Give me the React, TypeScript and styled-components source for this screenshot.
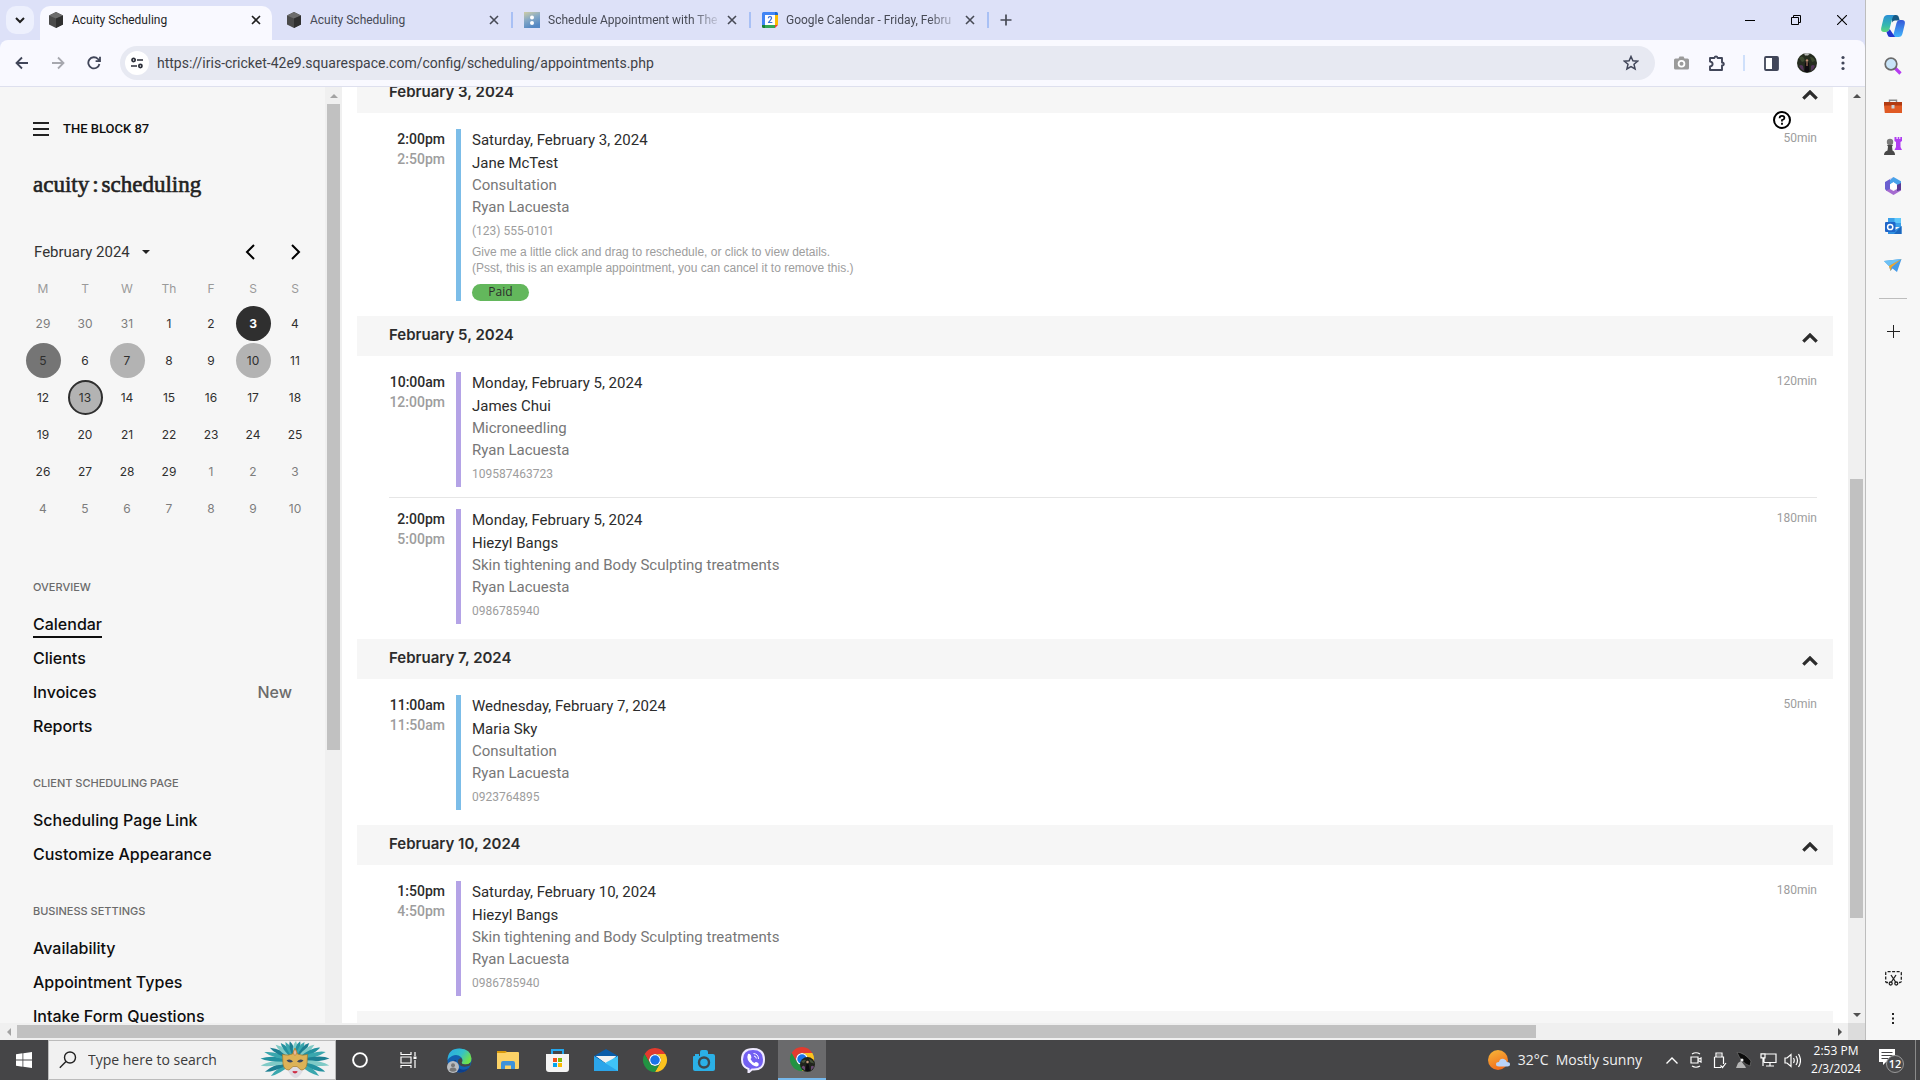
import React from "react";
import styled, { createGlobalStyle, css } from "styled-components";

const ui = `"Open Sans", "Noto Sans", sans-serif`;
const body = `Roboto, "Liberation Sans", sans-serif`;
const brand = `Inter, "Liberation Sans", sans-serif`;

const GlobalStyle = createGlobalStyle`
  *, *::before, *::after { box-sizing: border-box; }
  body { margin: 0; background: #fff; font-family: ${body}; }
  button, input, select { font: inherit; color: inherit; border: 0; background: none; padding: 0; margin: 0; outline: none; }
  a { color: inherit; text-decoration: none; }
  h1, h2, p { margin: 0; font-weight: inherit; font-size: inherit; }
  svg { display: block; flex: none; }
`;

/* ---------- shell ---------- */
const Desktop = styled.div`
  display: flex;
  flex-direction: column;
  height: 100vh;
  overflow: hidden;
`;
const Workspace = styled.div`
  display: flex;
  flex: 1;
  min-height: 0;
`;
const BrowserWindow = styled.div`
  display: flex;
  flex-direction: column;
  flex: 1;
  min-width: 0;
  background: #dde1f8;
`;

/* ---------- tab strip ---------- */
const TabStrip = styled.div`
  display: flex;
  height: 40px;
  padding: 6px 0 0 6px;
  font: 12px/16px ${body};
  color: #474a55;
`;
const TabSearch = styled.button`
  display: grid;
  place-items: center;
  width: 28px;
  height: 28px;
  margin-right: 6px;
  border-radius: 10px;
  background: #edf0fd;
`;
const Tab = styled.div<{ $active?: boolean; $divided?: boolean }>`
  position: relative;
  display: flex;
  align-items: center;
  width: 238px;
  height: 34px;
  padding: 0 12px 6px 8px;
  ${(p) =>
    p.$active &&
    css`
      &::before {
        content: "";
        position: absolute;
        inset: 0 6px 0 0;
        border-radius: 10px 10px 0 0;
        background: #f9f9ff;
      }
      color: #1f1f1f;
    `}
  ${(p) =>
    p.$divided &&
    css`
      &::after {
        content: "";
        position: absolute;
        right: 3px;
        top: 6px;
        width: 2px;
        height: 16px;
        background: #a8c0f5;
      }
    `}
`;
const TabLink = styled.button<{ $fade?: boolean }>`
  position: relative;
  display: flex;
  align-items: center;
  gap: 8px;
  flex: 1;
  min-width: 0;
  margin-right: 6px;
  white-space: nowrap;
  ${(p) => p.$fade && css`mask-image: linear-gradient(90deg, #000 86%, rgba(0, 0, 0, 0.15));`}
`;
const TabClose = styled.button`
  position: relative;
  display: grid;
  place-items: center;
  width: 16px;
  height: 16px;
  margin-right: 2px;
`;
const NewTab = styled.button`
  display: grid;
  place-items: center;
  width: 28px;
  height: 28px;
`;
const WindowControls = styled.div`
  display: flex;
  margin-left: auto;
  height: 28px;
  button { display: grid; place-items: center; width: 46px; }
`;

/* ---------- toolbar ---------- */
const Toolbar = styled.div`
  display: flex;
  align-items: center;
  height: 47px;
  padding: 0 4px;
  border-bottom: 1px solid #dee0ee;
  border-radius: 8px 8px 0 0;
  background: #f9f9ff;
`;
const ToolButton = styled.button`
  display: grid;
  place-items: center;
  width: 36px;
  height: 34px;
`;
const AddressBar = styled.form`
  display: flex;
  align-items: center;
  flex: 1;
  height: 34px;
  margin: 0 8px;
  padding: 0 6px 0 5px;
  border-radius: 17px;
  background: #e7e9f2;
`;
const SiteInfo = styled.button`
  display: grid;
  place-items: center;
  width: 24px;
  height: 24px;
  margin-right: 8px;
  border-radius: 50%;
  background: #fff;
`;
const Url = styled.input`
  flex: 1;
  min-width: 0;
  font: 14px/20px ${body};
  color: #3f4248;
`;
const Divider = styled.span`
  width: 2px;
  height: 16px;
  margin: 0 8px;
  background: #cfe0fb;
`;

/* ---------- page ---------- */
const Page = styled.div`
  display: flex;
  flex: 1;
  min-height: 0;
  background: #fff;
`;
const Side = styled.aside`
  width: 325px;
  flex: none;
  overflow: hidden;
  padding-top: 32px;
  background: #f6f6f6;
  color: #0e0e0e;
`;
const SiteRow = styled.button`
  display: flex;
  align-items: center;
  gap: 14px;
  height: 20px;
  margin-left: 33px;
  font: 500 13px/20px ${body};
`;
const Wordmark = styled.h1`
  margin: 32px 0 37px 33px;
  font: 23px/28px "Liberation Serif", serif;
  color: #222;
  -webkit-text-stroke: 0.6px #222;
  span { margin: 0 3px; }
`;
const MonthRow = styled.div`
  display: flex;
  align-items: center;
  height: 32px;
  margin: 0 17px 5px 34px;
  color: #333;
`;
const MonthSelect = styled.select`
  appearance: none;
  width: 108px;
  font: 15px/20px ${body};
`;
const MonthArrow = styled.button<{ $first?: boolean }>`
  display: grid;
  place-items: center;
  width: 24px;
  height: 24px;
  margin-left: ${(p) => (p.$first ? "auto" : "22px")};
`;
const MonthTable = styled.table`
  margin-left: 22px;
  border-collapse: collapse;
  table-layout: fixed;
  width: 294px;
  font: 12px/16px ${brand};
  th { height: 32px; padding: 0; font-weight: 400; color: #9a9a9a; }
  td { height: 37px; padding: 0; text-align: center; }
`;
type Mark = "today" | "busy" | "some" | "picked" | undefined;
const marks = {
  today: css`background: #2f2f2f; color: #fff; font-weight: 700;`,
  busy: css`background: #757575;`,
  some: css`background: #b3b3b3;`,
  picked: css`background: #b3b3b3; border: 2px solid #2f2f2f;`,
};
const Day = styled.button<{ $mark?: Mark; $muted?: boolean }>`
  width: 35px;
  height: 35px;
  border-radius: 50%;
  color: ${(p) => (p.$muted ? "#7d7d7d" : "#2f2f2f")};
  ${(p) => p.$mark && marks[p.$mark]}
`;
const Nav = styled.nav`
  padding: 20px 33px 0;
  font: 500 16px/24px ${brand};
`;
const NavLabel = styled.h2`
  margin: 32px 0 12px;
  font: 500 11px/16px ${brand};
  color: #6b6b6b;
`;
const NavItem = styled.a`
  display: flex;
  justify-content: space-between;
  align-items: flex-start;
  height: 34px;
  padding-top: 5px;
`;
const NavText = styled.span<{ $current?: boolean }>`
  border-bottom: 2px solid ${(p) => (p.$current ? "#0e0e0e" : "transparent")};
`;
const NavTag = styled.span`
  color: #6b6b6b;
`;

/* ---------- scroll bars ---------- */
const Rail = styled.div<{ $row?: boolean }>`
  display: flex;
  flex: ${(p) => (p.$row ? "1" : "none")};
  flex-direction: ${(p) => (p.$row ? "row" : "column")};
  align-items: center;
  ${(p) => (p.$row ? "height" : "width")}: 17px;
  background: #f0f0f0;
`;
const RailArrow = styled.button`
  display: grid;
  place-items: center;
  width: 17px;
  height: 17px;
`;
const RailSpace = styled.span<{ $grow: number }>`
  flex: ${(p) => p.$grow} 1 0;
`;
const RailThumb = styled.span<{ $grow: number; $row?: boolean }>`
  flex: ${(p) => p.$grow} 1 0;
  ${(p) => (p.$row ? "height" : "width")}: 13px;
  background: #c1c1c1;
`;
const BottomRail = styled.div`
  display: flex;
  height: 17px;
`;
const Corner = styled.span`
  width: 17px;
  background: #dcdcdc;
`;

/* ---------- appointments ---------- */
const Main = styled.main`
  position: relative;
  flex: 1;
  min-width: 0;
  overflow: hidden;
  padding: 0 15px;
`;
const Agenda = styled.div`
  margin-top: -14px;
`;
const GroupHeader = styled.header`
  display: flex;
  justify-content: space-between;
  height: 40px;
  padding: 9px 15px 0 32px;
  background: #f6f6f6;
  font: 600 15px/20px ${brand};
  color: #2c2c2c;
  button { padding-top: 6px; height: 20px; }
`;
const GroupBody = styled.div`
  padding: 16px 16px 15px 32px;
`;
const Appointment = styled.article`
  display: flex;
  & + & {
    margin-top: 10px;
    padding-top: 11px;
    border-top: 1px solid #e6e6e6;
  }
`;
const Times = styled.div`
  width: 56px;
  margin-right: 11px;
  text-align: right;
  white-space: nowrap;
  font: 500 14px/20px ${body};
  color: #2c2c2c;
  p + p { color: #9d9d9d; }
`;
const Details = styled.div<{ $color: string }>`
  flex: 1;
  padding-left: 11px;
  border-left: 5px solid ${(p) => p.$color};
  font: 15px/22px ${body};
  color: #2c2c2c;
`;
const ApptDate = styled.p`
  padding-bottom: 1px;
`;
const Muted = styled.p`
  color: #777;
`;
const Small = styled.p`
  font-size: 12px;
  line-height: 26px;
  color: #9d9d9d;
`;
const Note = styled.p`
  font: 12px/16px "Liberation Sans", sans-serif;
  color: #9d9d9d;
`;
const Badge = styled.span`
  display: block;
  width: 57px;
  height: 17px;
  margin-top: 8px;
  border-radius: 9px;
  background: #63b75c;
  font: 12px/16px ${ui};
  text-align: center;
`;
const Duration = styled.span`
  font: 12px/18px ${body};
  color: #9d9d9d;
`;
const Help = styled.button`
  position: absolute;
  right: 57px;
  top: 24px;
`;

/* ---------- right app rail ---------- */
const AppRail = styled.aside`
  display: flex;
  flex-direction: column;
  align-items: center;
  width: 55px;
  padding: 6px 0 2px;
  border-left: 1px solid #bdbdbd;
  background: #f7f7f7;
`;
const RailApp = styled.button`
  display: grid;
  place-items: center;
  width: 40px;
  height: 40px;
`;
const RailLine = styled.hr`
  width: 28px;
  margin: 12px 0;
  border: 0;
  border-top: 1px solid #bdbdbd;
`;
const Spacer = styled.span`
  flex: 1;
`;

/* ---------- taskbar ---------- */
const Taskbar = styled.footer`
  display: flex;
  height: 40px;
  background: #454547;
  color: #fff;
  font: 14px/20px ${ui};
`;
const TaskButton = styled.button<{ $active?: boolean }>`
  display: grid;
  place-items: center;
  width: 48px;
  height: 40px;
  ${(p) => p.$active && css`background: #6a6a6c; border-bottom: 2px solid #76b9ed;`}
`;
const TaskSearch = styled.label`
  display: flex;
  align-items: center;
  gap: 11px;
  width: 288px;
  padding: 0 3px 0 10px;
  border: 1px solid #bcbcbc;
  background: #f1f1f1;
  input { flex: 1; min-width: 0; color: #333; }
  input::placeholder { color: #3b3b3b; opacity: 1; }
`;
const Pinned = styled.div`
  display: flex;
  gap: 1px;
  margin-left: 3px;
`;
const Weather = styled.button`
  display: flex;
  align-items: center;
  gap: 7px;
  margin-left: auto;
  margin-right: 18px;
  color: #f0f0f0;
`;
const TrayButton = styled.button`
  display: grid;
  place-items: center;
  width: 24px;
  height: 40px;
`;
const Clock = styled.div`
  width: 64px;
  text-align: center;
  font-size: 12px;
  line-height: 18px;
  padding-top: 2px;
`;
const Notices = styled.button`
  display: grid;
  place-items: center;
  width: 48px;
  border-right: 1px solid #8a8a8a;
  margin-right: 4px;
`;

/* ---------- drawings ---------- */
const Cube = () => (
  <svg width="16" height="16" viewBox="0 0 16 16">
    <path d="M8 0l7 3.4v9.2L8 16l-7-3.4V3.400z" fill="#4b4b4b" />
    <path d="M8 0l7 3.400-7 3-7-3z" fill="#6c6c6c" />
    <path d="M8 6.400l7-3v9.200L8 16z" fill="#303030" />
  </svg>
);
const SchedIcon = () => (
  <svg width="16" height="16" viewBox="0 0 16 16">
    <defs>
      <linearGradient id="sch" x1="0" y1="0" x2=".4" y2="1">
        <stop offset="0" stopColor="#cfcda6" />
        <stop offset=".5" stopColor="#86a9c6" />
        <stop offset="1" stopColor="#5488c4" />
      </linearGradient>
    </defs>
    <path d="M0 0h16v16H0z" fill="url(#sch)" />
    <circle cx="8" cy="5.500" r="2" fill="#fff" />
    <circle cx="8" cy="11" r="2" fill="#fff" />
  </svg>
);
const GCal = () => (
  <svg width="16" height="16" viewBox="0 0 16 16">
    <path d="M0 1.500Q0 0 1.500 0H13v3H3v10H0z" fill="#4285f4" />
    <path d="M13 0h1.500Q16 0 16 1.500V3h-3z" fill="#1967d2" />
    <path d="M13 3h3v10h-3z" fill="#fbbc04" />
    <path d="M3 13h10v3H3z" fill="#34a853" />
    <path d="M0 13h3v3H1.500Q0 16 0 14.500z" fill="#188038" />
    <path d="M13 13h3l-3 3z" fill="#ea4335" />
    <path d="M3 3h10v10H3z" fill="#fff" />
    <text x="8" y="11.200" textAnchor="middle" fontSize="9" fontWeight="700" fontFamily="Roboto, sans-serif" fill="#3c6fd6">2</text>
  </svg>
);
const Cross = () => (
  <svg width="10" height="10" viewBox="0 0 10 10" stroke="currentColor" strokeWidth="1.600">
    <path d="M1 1l8 8M9 1L1 9" />
  </svg>
);
const Chrome = ({ avatar = false }) => (
  <svg width="26" height="26" viewBox="-2 -2 52 52">
    <circle cx="24" cy="24" r="12" fill="#fff" />
    <path d="M24 12h20.780a23.990 23.990 0 0 0-41.560.003L13.610 30l.009-.002A11.985 11.985 0 0 1 24 12z" fill="#e33b2e" />
    <path d="M34.391 30.003 24.001 48A23.994 23.994 0 0 0 44.780 12.003H23.999l-.003.009a11.985 11.985 0 0 1 10.395 17.991z" fill="#fcc31e" />
    <path d="M13.609 30.003 3.218 12.006A23.994 23.994 0 0 0 24.003 48l10.390-17.996-.007-.007a11.985 11.985 0 0 1-20.778.006z" fill="#229342" />
    <circle cx="24" cy="24" r="9.500" fill="#1a73e8" />
    {avatar && (
      <g>
        <circle cx="35" cy="35" r="15" fill="#20241c" />
        <path d="M22 30q5-6 10-4l-4 6zM38 24q8 2 10 9l-7-2z" fill="#45543a" />
        <path d="M31 48l2-14h4l3 14z" fill="#0d0b10" />
        <circle cx="35" cy="30" r="2.500" fill="#c79a7c" />
        <path d="M23 41q3-6 7-1v7zM42 39q4-3 6 1l-6 7z" fill="#6a4a74" />
      </g>
    )}
  </svg>
);
const Avatar = () => (
  <svg width="20" height="20" viewBox="0 0 20 20">
    <circle cx="10" cy="10" r="10" fill="#252c1f" />
    <path d="M7 .5q3-.8 6 0l-2 2H8z" fill="#b9b9b9" />
    <path d="M2 5q3-3 5 0t-2 4zM13 4q4 0 5 4l-3 1z" fill="#3d4a30" />
    <path d="M7.500 19l.5-9q2-3 4 0l.5 9z" fill="#0e0b10" />
    <circle cx="10" cy="7.500" r="1.200" fill="#c08d73" />
    <path d="M9.400 9h1.200v4H9.400z" fill="#a97860" />
    <path d="M2 13q2-2 4 0l1 5q-3-1-5-5zM14 13q2-2 4 0-1 3-4 5z" fill="#54355a" />
  </svg>
);
const Chevron = () => (
  <svg width="16" height="10" viewBox="0 0 16 10" fill="none" stroke="#2c2c2c" strokeWidth="3.200">
    <path d="M1.300 8.700L8 2l6.700 6.700" />
  </svg>
);
const Tri = ({ dir, color = "#505050" }: { dir: "u" | "d" | "l" | "r"; color?: string }) => {
  const d = { u: "M0 6l4-4 4 4z", d: "M0 2l4 4 4-4z", l: "M6 0L2 4l4 4z", r: "M2 0l4 4-4 4z" }[dir];
  return (
    <svg width="8" height="8" viewBox="0 0 8 8">
      <path d={d} fill={color} />
    </svg>
  );
};
const Mask = () => {
  const feathers = Array.from({ length: 21 }, (_, i) => {
    const angle = -120 + i * 12;
    const rad = (angle * Math.PI) / 180;
    const len = 1 / Math.hypot(Math.sin(rad) / 35, Math.cos(rad) / 20);
    return (
      <path
        key={i}
        transform={`translate(35 20) rotate(${angle})`}
        d={`M-1 -4Q-4 ${-len * 0.75} ${i < 10 ? -1 : 1} ${-len}Q4 ${-len * 0.65} 1 -4z`}
        fill={["#3aa7ae", "#1d7f92", "#7fcac6", "#23919f"][i % 4]}
      />
    );
  });
  return (
    <svg width="72" height="38" viewBox="0 0 72 38">
      {feathers}
      <path d="M26.500 22q0 9 6.500 14 2.500 2 5 0 6.500-5 6.500-14z" fill="#dedce4" />
      <path d="M22.500 13.500q6 1.500 10-.5l2.500-6 2.500 6q4 2 10 .5L47 23q-1 6-6 6l-4-3.500h-4L29 29q-5 0-6-6z" fill="#dcb257" stroke="#a67a2b" strokeWidth=".7" />
      <path d="M26.500 19.500q3.500-2.500 6.500 1-3.500 2.500-6.500-1zM43.500 19.500q-3.500-2.500-6.500 1 3.500 2.500 6.500-1z" fill="#3b4762" />
      <path d="M32.200 30.800q1.400-1.300 2.800-.5 1.400-.8 2.800.5-2.800 3.200-5.600 0z" fill="#cf2b44" />
      <ellipse cx="35" cy="11.500" rx="1.600" ry="2.800" fill="#e9b9a0" stroke="#b47b2d" strokeWidth=".6" />
    </svg>
  );
};

/* ---------- data ---------- */
const tabs = [
  { title: "Acuity Scheduling", icon: <Cube />, active: true },
  { title: "Acuity Scheduling", icon: <Cube />, divided: true },
  { title: "Schedule Appointment with The", icon: <SchedIcon />, divided: true, fade: true },
  { title: "Google Calendar - Friday, Febru", icon: <GCal />, divided: true, fade: true },
];

const weeks = [
  [29, 30, 31, 1, 2, 3, 4],
  [5, 6, 7, 8, 9, 10, 11],
  [12, 13, 14, 15, 16, 17, 18],
  [19, 20, 21, 22, 23, 24, 25],
  [26, 27, 28, 29, 1, 2, 3],
  [4, 5, 6, 7, 8, 9, 10],
];
const markOf: Record<string, Mark> = { "0-5": "today", "1-0": "busy", "1-2": "some", "1-5": "some", "2-1": "picked" };
const isMuted = (w: number, d: number) => (w === 0 && d < 3) || (w === 4 && d > 3) || w === 5;

const nav = [
  { label: "OVERVIEW", items: ["Calendar", "Clients", "Invoices", "Reports"] },
  { label: "CLIENT SCHEDULING PAGE", items: ["Scheduling Page Link", "Customize Appearance"] },
  { label: "BUSINESS SETTINGS", items: ["Availability", "Appointment Types", "Intake Form Questions"] },
];

const blue = "#7cbde8";
const violet = "#b4a3e6";
type Appt = { start: string; end: string; date: string; name: string; type: string; phone: string; mins: string; color: string; note?: string[]; paid?: boolean };
const groups: { day: string; items: Appt[] }[] = [
  {
    day: "February 3, 2024",
    items: [
      {
        start: "2:00pm", end: "2:50pm", date: "Saturday, February 3, 2024", name: "Jane McTest", type: "Consultation",
        phone: "(123) 555-0101", mins: "50min", color: blue, paid: true,
        note: [
          "Give me a little click and drag to reschedule, or click to view details.",
          "(Psst, this is an example appointment, you can cancel it to remove this.)",
        ],
      },
    ],
  },
  {
    day: "February 5, 2024",
    items: [
      { start: "10:00am", end: "12:00pm", date: "Monday, February 5, 2024", name: "James Chui", type: "Microneedling", phone: "109587463723", mins: "120min", color: violet },
      { start: "2:00pm", end: "5:00pm", date: "Monday, February 5, 2024", name: "Hiezyl Bangs", type: "Skin tightening and Body Sculpting treatments", phone: "0986785940", mins: "180min", color: violet },
    ],
  },
  {
    day: "February 7, 2024",
    items: [
      { start: "11:00am", end: "11:50am", date: "Wednesday, February 7, 2024", name: "Maria Sky", type: "Consultation", phone: "0923764895", mins: "50min", color: blue },
    ],
  },
  {
    day: "February 10, 2024",
    items: [
      { start: "1:50pm", end: "4:50pm", date: "Saturday, February 10, 2024", name: "Hiezyl Bangs", type: "Skin tightening and Body Sculpting treatments", phone: "0986785940", mins: "180min", color: violet },
    ],
  },
];

/* ---------- sections ---------- */
const TabsBar = () => (
  <TabStrip>
    <TabSearch aria-label="Search tabs">
      <svg width="10" height="10" viewBox="0 0 10 10" fill="none" stroke="#1f1f1f" strokeWidth="2"><path d="M1 3l4 4 4-4" /></svg>
    </TabSearch>
    {tabs.map((t, i) => (
      <Tab key={i} $active={t.active} $divided={t.divided}>
        <TabLink $fade={t.fade}>{t.icon}{t.title}</TabLink>
        <TabClose aria-label="Close tab"><Cross /></TabClose>
      </Tab>
    ))}
    <NewTab aria-label="New tab">
      <svg width="12" height="12" viewBox="0 0 12 12" stroke="#474a55" strokeWidth="1.700"><path d="M6 .5v11M.5 6h11" /></svg>
    </NewTab>
    <WindowControls>
      <button aria-label="Minimize"><svg width="10" height="10" viewBox="0 0 10 10" stroke="#000"><path d="M0 5.500h10" /></svg></button>
      <button aria-label="Restore"><svg width="10" height="10" viewBox="0 0 10 10" fill="none" stroke="#000"><path d="M.5 2.500h7v7h-7zM2.500 2.500v-2h7v7h-2" /></svg></button>
      <button aria-label="Close"><svg width="10" height="10" viewBox="0 0 10 10" stroke="#000" strokeWidth="1.100"><path d="M0 0l10 10M10 0L0 10" /></svg></button>
    </WindowControls>
  </TabStrip>
);

const ToolbarRow = () => (
  <Toolbar>
    <ToolButton aria-label="Back">
      <svg width="14" height="14" viewBox="0 0 14 14" fill="none" stroke="#414659" strokeWidth="1.800"><path d="M13 7H2M7 1.500L1.500 7 7 12.500" /></svg>
    </ToolButton>
    <ToolButton aria-label="Forward">
      <svg width="14" height="14" viewBox="0 0 14 14" fill="none" stroke="#a7a8af" strokeWidth="1.800"><path d="M1 7h11M7 1.500L12.500 7 7 12.500" /></svg>
    </ToolButton>
    <ToolButton aria-label="Reload">
      <svg width="14" height="14" viewBox="0 0 14 14" fill="none" stroke="#414659" strokeWidth="1.800"><path d="M12.400 8A5.600 5.600 0 1 1 11 3l1.800 2M13 .8v4.400H8.600" /></svg>
    </ToolButton>
    <AddressBar>
      <SiteInfo type="button" aria-label="Site information">
        <svg width="12" height="12" viewBox="0 0 12 12" fill="none" stroke="#2b2e38" strokeWidth="1.700"><circle cx="2.600" cy="3" r="1.600" /><path d="M6 3h6M0 9h6" /><circle cx="9.400" cy="9" r="1.600" /></svg>
      </SiteInfo>
      <Url aria-label="Address" defaultValue="https://iris-cricket-42e9.squarespace.com/config/scheduling/appointments.php" />
      <ToolButton type="button" aria-label="Bookmark">
        <svg width="16" height="16" viewBox="0 0 16 16" fill="none" stroke="#414659" strokeWidth="1.500"><path d="M8 1.500l1.900 4.300 4.700.4-3.600 3.100 1.100 4.600L8 11.500l-4.100 2.400L5 9.300 1.400 6.200l4.700-.4z" /></svg>
      </ToolButton>
    </AddressBar>
    <ToolButton aria-label="Screenshot">
      <svg width="15" height="14" viewBox="0 0 15 14"><path d="M1.500 2.500h3L5.500.5h4l1 2h3q1.500 0 1.500 1.500v8q0 1.500-1.500 1.500h-12Q0 13.500 0 12V4q0-1.500 1.500-1.500z" fill="#9b9b9b" /><circle cx="7.500" cy="7.800" r="3.800" fill="#fff" /><circle cx="7.500" cy="7.800" r="2" fill="#9b9b9b" /></svg>
    </ToolButton>
    <ToolButton aria-label="Extensions">
      <svg width="18" height="17" viewBox="0 0 18 17" fill="none" stroke="#414659" strokeWidth="1.900" strokeLinejoin="round"><path d="M2 3h4.500q.2-1.600 1.500-1.600T9.500 3H14v4.500q1.800.1 1.800 1.500T14 10.500V15H2v-3.500q2.600-.5 2.600-2.500T2 6.500z" /></svg>
    </ToolButton>
    <Divider />
    <ToolButton aria-label="Side panel">
      <svg width="15" height="15" viewBox="0 0 15 15"><rect x="1" y="1" width="13" height="13" rx="1" fill="#fff" stroke="#414659" strokeWidth="1.800" /><path d="M8 1h6v13H8z" fill="#414659" /></svg>
    </ToolButton>
    <ToolButton aria-label="Profile"><Avatar /></ToolButton>
    <ToolButton aria-label="Menu">
      <svg width="4" height="16" viewBox="0 0 4 16" fill="#414659"><circle cx="2" cy="2.500" r="1.600" /><circle cx="2" cy="8" r="1.600" /><circle cx="2" cy="13.500" r="1.600" /></svg>
    </ToolButton>
  </Toolbar>
);

const SidePanel = () => (
  <Side>
    <SiteRow>
      <svg width="16" height="14" viewBox="0 0 16 14" stroke="#222" strokeWidth="2"><path d="M0 1h16M0 7h16M0 13h16" /></svg>
      THE BLOCK 87
    </SiteRow>
    <Wordmark>acuity<span>:</span>scheduling</Wordmark>
    <MonthRow>
      <MonthSelect aria-label="Month" defaultValue="feb"><option value="feb">February 2024</option></MonthSelect>
      <svg width="8" height="4" viewBox="0 0 8 4"><path d="M0 0h8L4 4z" fill="#222" /></svg>
      <MonthArrow $first aria-label="Previous month">
        <svg width="10" height="16" viewBox="0 0 10 16" fill="none" stroke="#000" strokeWidth="2"><path d="M9 1L2 8l7 7" /></svg>
      </MonthArrow>
      <MonthArrow aria-label="Next month">
        <svg width="10" height="16" viewBox="0 0 10 16" fill="none" stroke="#000" strokeWidth="2"><path d="M1 1l7 7-7 7" /></svg>
      </MonthArrow>
    </MonthRow>
    <MonthTable>
      <thead><tr>{["M", "T", "W", "Th", "F", "S", "S"].map((d, i) => <th key={i}>{d}</th>)}</tr></thead>
      <tbody>
        {weeks.map((week, w) => (
          <tr key={w}>
            {week.map((n, d) => <td key={d}><Day $mark={markOf[`${w}-${d}`]} $muted={isMuted(w, d)}>{n}</Day></td>)}
          </tr>
        ))}
      </tbody>
    </MonthTable>
    <Nav>
      {nav.map((s) => (
        <React.Fragment key={s.label}>
          <NavLabel>{s.label}</NavLabel>
          {s.items.map((item) => (
            <NavItem key={item} href="#">
              <NavText $current={item === "Calendar"}>{item}</NavText>
              {item === "Invoices" && <NavTag>New</NavTag>}
            </NavItem>
          ))}
        </React.Fragment>
      ))}
    </Nav>
  </Side>
);

const AgendaView = () => (
  <Main>
    <Agenda>
      {groups.map((g) => (
        <section key={g.day}>
          <GroupHeader>
            <h2>{g.day}</h2>
            <button aria-label="Collapse day"><Chevron /></button>
          </GroupHeader>
          <GroupBody>
            {g.items.map((a) => (
              <Appointment key={a.start}>
                <Times><p>{a.start}</p><p>{a.end}</p></Times>
                <Details $color={a.color}>
                  <ApptDate>{a.date}</ApptDate>
                  <p>{a.name}</p>
                  <Muted>{a.type}</Muted>
                  <Muted>Ryan Lacuesta</Muted>
                  <Small>{a.phone}</Small>
                  {a.note?.map((line) => <Note key={line}>{line}</Note>)}
                  {a.paid && <Badge>Paid</Badge>}
                </Details>
                <Duration>{a.mins}</Duration>
              </Appointment>
            ))}
          </GroupBody>
        </section>
      ))}
      <GroupHeader />
    </Agenda>
    <Help aria-label="Help">
      <svg width="18" height="18" viewBox="0 0 18 18" fill="none" stroke="#000" strokeWidth="2"><circle cx="9" cy="9" r="8" /><path d="M6.600 7.200q0-2.300 2.400-2.300t2.400 2.100Q11.400 8.500 9 9.200v1.300M9 11.800v1.900" strokeWidth="1.800" /></svg>
    </Help>
  </Main>
);

const VRail = ({ parts, color }: { parts: [number, number, number]; color?: string }) => (
  <Rail>
    <RailArrow aria-label="Scroll up"><Tri dir="u" color={color} /></RailArrow>
    <RailSpace $grow={parts[0]} />
    <RailThumb $grow={parts[1]} />
    <RailSpace $grow={parts[2]} />
    <RailArrow aria-label="Scroll down"><Tri dir="d" color={color} /></RailArrow>
  </Rail>
);
const SideRail = () => (
  <Rail>
    <RailArrow aria-label="Scroll up"><Tri dir="u" color="#a3a3a3" /></RailArrow>
    <RailThumb $grow={646} />
    <RailSpace $grow={273} />
  </Rail>
);

const RightApps = () => (
  <AppRail>
    <RailApp aria-label="Copilot">
      <svg width="24" height="22" viewBox="0 0 24 22">
        <defs>
          <linearGradient id="cpA" x1="0" y1="0" x2="0" y2="1"><stop offset="0" stopColor="#2a8fd6" /><stop offset=".6" stopColor="#35b8b0" /><stop offset="1" stopColor="#5fd77b" /></linearGradient>
          <linearGradient id="cpB" x1="0" y1="0" x2="0" y2="1"><stop offset="0" stopColor="#3558d8" /><stop offset="1" stopColor="#42b4fb" /></linearGradient>
        </defs>
        <path d="M10 0h5q2.500 0 3 3l.7 2.500H14q-2 0-2.600 2z" fill="#175a85" />
        <path d="M6.500 0H14q-2 .5-2.600 3L8.500 14q-.8 3-3.500 3H3Q-.7 17 .3 12.500L2.500 3.500Q3.300 0 6.500 0z" fill="url(#cpA)" />
        <path d="M17.500 22H10q2-.5 2.600-3l2.900-11q.8-3 3.500-3h2q3.700 0 2.700 4.500l-2.200 9Q20.700 22 17.500 22z" fill="url(#cpB)" />
        <path d="M14 22H9q-2 0-2.600-2.500L5.500 17q2.500-.2 3.200-3z" fill="#2337cf" />
      </svg>
    </RailApp>
    <RailApp aria-label="Search">
      <svg width="18" height="18" viewBox="0 0 18 18"><path d="M11 11l5.500 5.500" stroke="#b63cf0" strokeWidth="3.200" /><circle cx="7" cy="7" r="5.800" fill="#c8e4f8" stroke="#6b6b6b" strokeWidth="1.700" /></svg>
    </RailApp>
    <RailApp aria-label="Shopping tools">
      <svg width="18" height="14" viewBox="0 0 18 14"><path d="M5.500 4V1.200h7V4" fill="none" stroke="#8a8a8a" strokeWidth="1.400" /><path d="M0 3h18v4H0z" fill="#b23b12" /><path d="M0 6.500h18V14H.8z" fill="#e05a24" /><rect x="7.500" y="6" width="3" height="3.500" fill="#c9d3d8" /></svg>
    </RailApp>
    <RailApp aria-label="Games">
      <svg width="18" height="18" viewBox="0 0 18 18"><path d="M10.500 0h2v2h1.200V0h1.600v2h1V0H18v4l-1.500 1v5l1.500 3h-7.500l1.500-3V5l-1.500-1z" fill="#b03df2" /><circle cx="6" cy="5" r="3.200" fill="#7a7a7a" /><path d="M3 8h6l-1 1.500.5 4q2.500 1 2.500 4.500H0q0-3.500 3.500-4.500l.5-4z" fill="#484848" /></svg>
    </RailApp>
    <RailApp aria-label="Microsoft 365">
      <svg width="17" height="18" viewBox="0 0 17 18"><path d="M8.500 0L16 4.200v6L12 8.500 8.500 5 5 7.500V3z" fill="#48a2ea" /><path d="M8.500 0L5 2.500V13l-3.500 1L0 12V5z" fill="#6a5fd0" /><path d="M16 8v5.500L8.500 18 1 13.500 5 12l3.500 2L12 12V8z" fill="#a56bd0" /><path d="M12 8l4-2v7l-4 1z" fill="#5a3a96" /><path d="M8.500 5.500l3.300 1.800v3.600l-3.300 1.900-3.300-1.900V7.300z" fill="#fff" /></svg>
    </RailApp>
    <RailApp aria-label="Outlook">
      <svg width="17" height="17" viewBox="0 0 17 17"><path d="M3 0h13v9H3z" fill="#3aa0ea" /><path d="M9.500 0H16v5H9.500z" fill="#5fc8fb" /><path d="M3 16V9l7 3 6.500-4v8z" fill="#2f8fe0" /><path d="M9 16l7.500-8v8z" fill="#1c66bd" /><rect y="4" width="10.500" height="10" rx="1" fill="#1f66c9" /><circle cx="5.200" cy="9" r="2.600" fill="none" stroke="#fff" strokeWidth="1.500" /></svg>
    </RailApp>
    <RailApp aria-label="Drop">
      <svg width="18" height="14" viewBox="0 0 18 14"><path d="M0 2L17.500 0 13 13 8.500 9.500 6.500 12 5 7z" fill="#459be8" /><path d="M0 2L17.500 0 5 7z" fill="#6cc1f4" /><path d="M17.500 0L5 7l1.500 5 1.200-4z" fill="#f1a82b" /></svg>
    </RailApp>
    <RailLine />
    <RailApp aria-label="Add">
      <svg width="13" height="13" viewBox="0 0 13 13" stroke="#222"><path d="M6.500 0v13M0 6.500h13" /></svg>
    </RailApp>
    <Spacer />
    <RailApp aria-label="Screenshot tool">
      <svg width="17" height="15" viewBox="0 0 17 15" fill="none" stroke="#222" strokeWidth="1.300"><path d="M3 11.500H2q-1.300 0-1.300-1.300V2Q.7.700 2 .7h13q1.300 0 1.300 1.300v8.200q0 1.300-1.300 1.300h-1" strokeDasharray="3 1.500" /><path d="M6 4l4.600 7M11 4l-4.600 7" /><circle cx="5.700" cy="12.500" r="1.500" /><circle cx="11.300" cy="12.500" r="1.500" /></svg>
    </RailApp>
    <RailApp aria-label="More">
      <svg width="2" height="11" viewBox="0 0 2 11" fill="#222"><path d="M0 0h2v2H0zM0 4.500h2v2H0zM0 9h2v2H0z" /></svg>
    </RailApp>
  </AppRail>
);

const TaskbarRow = () => (
  <Taskbar>
    <TaskButton aria-label="Start">
      <svg width="16" height="16" viewBox="0 0 16 16" fill="#fff"><path d="M0 2.200L6.500 1.300v6.200H0zM7.300 1.200L16 0v7.500H7.300zM0 8.400h6.500v6.300L0 13.800zM7.300 8.400H16V16l-8.700-1.200z" /></svg>
    </TaskButton>
    <TaskSearch>
      <svg width="18" height="18" viewBox="0 0 18 18" fill="none" stroke="#222" strokeWidth="1.400"><circle cx="11" cy="6.500" r="5.500" /><path d="M7 10.500L.8 16.700" /></svg>
      <input aria-label="Search" placeholder="Type here to search" />
      <Mask />
    </TaskSearch>
    <TaskButton aria-label="Cortana">
      <svg width="16" height="16" viewBox="0 0 16 16" fill="none" stroke="#fff" strokeWidth="1.900"><circle cx="8" cy="8" r="6.900" /></svg>
    </TaskButton>
    <TaskButton aria-label="Task view">
      <svg width="17" height="16" viewBox="0 0 17 16" fill="none" stroke="#fff" strokeWidth="1.200"><path d="M1 0v2.500h10V0M1 16v-2.500h10V16M1 5h10v6H1zM15 0v4M15 8v8" /><path d="M13.500 4.500h3v2.500h-3z" fill="#fff" stroke="none" /></svg>
    </TaskButton>
    <Pinned>
      <TaskButton aria-label="Edge">
        <svg width="25" height="25" viewBox="0 0 25 25">
          <defs>
            <linearGradient id="edT" x1="0" y1="0" x2="1" y2=".5"><stop offset="0" stopColor="#28a8e8" /><stop offset=".6" stopColor="#35c1c8" /><stop offset="1" stopColor="#6fe04c" /></linearGradient>
          </defs>
          <circle cx="12.500" cy="12.500" r="12" fill="#1260b0" />
          <path d="M.5 12Q1 .5 12.500.5q11.500.5 12 10 0 6-6 6-4.500 0-4-2.500 2-2.500-.5-5Q10 5.500 5 8 1.500 10 .5 12z" fill="url(#edT)" />
          <path d="M9 12q-.5 6 4 9 4 2 9-1-4 5-10 4.500Q6 23 5.500 17 5.500 12 9 12z" fill="#0d3f8c" />
          <path d="M14 10q2.500 2.500.5 4.800.5 2 4 1.800 3.500 0 5-2l-.5 3q-4 1.500-7 1-4-1-5-4Q10 11 14 10z" fill="#454547" />
          <circle cx="6" cy="19" r="6" fill="#b9bcc0" /><circle cx="6" cy="17.200" r="2" fill="#777" /><path d="M2.500 22.500q0-3 3.500-3t3.500 3q-3.500 2.500-7 0z" fill="#777" />
        </svg>
      </TaskButton>
      <TaskButton aria-label="File Explorer">
        <svg width="22" height="18" viewBox="0 0 22 18"><path d="M0 0h9l1.500 2H0z" fill="#d99a0b" /><path d="M0 2h8l2-1h11q1 0 1 1v15q0 1-1 1H0z" fill="#fcd267" /><path d="M4 18v-6q0-2 2-2h10q2 0 2 2v6h-4v-3.500H8V18z" fill="#3e92db" /></svg>
      </TaskButton>
      <TaskButton aria-label="Microsoft Store">
        <svg width="23" height="23" viewBox="0 0 23 23"><path d="M6 6V1h11v5" fill="none" stroke="#24a7ee" strokeWidth="2" /><path d="M0 5h23v15q0 3-3 3H3q-3 0-3-3z" fill="#f4f4f4" /><path d="M7 9h4v4H7z" fill="#f1511b" /><path d="M12 9h4v4h-4z" fill="#80bb0a" /><path d="M7 14h4v4H7z" fill="#00a4ef" /><path d="M12 14h4v4h-4z" fill="#fbb900" /></svg>
      </TaskButton>
      <TaskButton aria-label="Mail">
        <svg width="24" height="22" viewBox="0 0 24 22"><path d="M0 7l12-7 12 7v5H0z" fill="#0b5ca8" /><path d="M2 7h20l-8 9z" fill="#f2f2f2" /><path d="M0 7l13 8 11-8v15H0z" fill="#2ba5ea" /><path d="M2 7h20l-9 7.500z" fill="#f2f2f2" /><path d="M24 7v15L11 14z" fill="#3fc3f7" /></svg>
      </TaskButton>
      <TaskButton aria-label="Chrome"><Chrome /></TaskButton>
      <TaskButton aria-label="Camera">
        <svg width="22" height="21" viewBox="0 0 22 21"><path d="M0 7q0-1 1-1h1V4h4v2h1V2q0-2 2-2h4q2 0 2 2v2h5q2 0 2 2v13q0 2-2 2H2q-2 0-2-2z" fill="#2bb0e6" /><circle cx="11" cy="12.500" r="5" fill="#2bb0e6" stroke="#3f474b" strokeWidth="2.400" /></svg>
      </TaskButton>
      <TaskButton aria-label="Viber">
        <svg width="24" height="25" viewBox="0 0 24 25"><path d="M12 1Q23 1 23 11.500T12 21.500H11L7.500 24.500V21Q1 19 1 11.500 1 1 12 1z" fill="#7360f2" stroke="#efeaff" strokeWidth="2" /><path d="M7 6q2-1 3 1.500T9.500 11q1.500 3 4 4 1-1.500 3-.5t1 3q-2 2-6-.5-7-5-4.500-11z" fill="#fff" /><path d="M12.500 5.500q5 .5 5 5.500M13 8q2.200.3 2.300 2.500" fill="none" stroke="#fff" strokeWidth="1" /></svg>
      </TaskButton>
      <TaskButton $active aria-label="Chrome window"><Chrome avatar /></TaskButton>
    </Pinned>
    <Weather>
      <svg width="23" height="21" viewBox="0 0 23 21"><defs><linearGradient id="sun" x1="0" y1="0" x2=".4" y2="1"><stop offset="0" stopColor="#f6b83a" /><stop offset="1" stopColor="#f36f1c" /></linearGradient></defs><circle cx="10" cy="10" r="10" fill="url(#sun)" /><path d="M11 16.500q-3 0-3-2.200T11 12q1-4 5-3 2.500.8 2.800 3 3.200 0 3.200 2.300t-3 2.200z" fill="#b8d2f8" /></svg>
      <span>32°C</span>
      <span>Mostly sunny</span>
    </Weather>
    <TrayButton aria-label="Show hidden icons">
      <svg width="12" height="7" viewBox="0 0 12 7" fill="none" stroke="#fff" strokeWidth="1.400"><path d="M.5 6.500L6 1l5.500 5.500" /></svg>
    </TrayButton>
    <TrayButton aria-label="Meet now">
      <svg width="12" height="16" viewBox="0 0 12 16" fill="none" stroke="#fff" strokeWidth="1.200"><path d="M2 2q4-2.500 8 0M2 14q4 2.500 8 0M1 5h7v6H1zM8 7.500L11 6v4L8 8.500" /></svg>
    </TrayButton>
    <TrayButton aria-label="USB">
      <svg width="14" height="17" viewBox="0 0 14 17" fill="none" stroke="#fff" strokeWidth="1.200"><path d="M3 5V1h6v4M1.500 5h9v7M8 15.500H1.500V5M5 2.500v1M7 2.500v1M7.500 13.500l2 2L13 11" /></svg>
    </TrayButton>
    <TrayButton aria-label="Satellite">
      <svg width="16" height="16" viewBox="0 0 16 16"><path d="M1 0q8 1 14 9l-1 5Q5 11 1 0z" fill="#0c0c0c" stroke="#777" strokeWidth=".6" /><path d="M5 9l4 5 1 2H0l2-5z" fill="#b5b5b5" /><circle cx="6" cy="8" r="1.500" fill="#eee" /></svg>
    </TrayButton>
    <TrayButton aria-label="Network">
      <svg width="17" height="14" viewBox="0 0 17 14" fill="none" stroke="#fff" strokeWidth="1.200"><path d="M5 1h11v8.500H4M4 5v4.500M10 9.500V13M6 13h8M1 .8h4v4H1zM3 4.800V13" /></svg>
    </TrayButton>
    <TrayButton aria-label="Volume">
      <svg width="17" height="15" viewBox="0 0 17 15" fill="none" stroke="#fff" strokeWidth="1.200"><path d="M1 5h2l4-3.500v12L3 10H1zM9.500 5q1.500 2.500 0 5M12 3q3 4.500 0 9M14.500 1q4 6.500 0 13" /></svg>
    </TrayButton>
    <Clock>2:53 PM<br />2/3/2024</Clock>
    <Notices aria-label="Notifications, 12 new">
      <svg width="28" height="26" viewBox="0 0 28 26"><path d="M1 2h16v13H8l-3 3v-3H1z" fill="#fff" /><path d="M3.500 5.500h11M3.500 8.500h11M3.500 11.500h7" stroke="#454547" strokeWidth="1.200" /><circle cx="17" cy="17" r="8.500" fill="#4a4a4c" stroke="#9a9a9a" /><text x="17" y="21" textAnchor="middle" fontSize="11" fontWeight="600" fontFamily="Open Sans, sans-serif" fill="#fff">12</text></svg>
    </Notices>
  </Taskbar>
);

export default function App() {
  return (
    <Desktop>
      <GlobalStyle />
      <Workspace>
        <BrowserWindow>
          <TabsBar />
          <ToolbarRow />
          <Page>
            <SidePanel />
            <SideRail />
            <AgendaView />
            <VRail parts={[375, 439, 88]} />
          </Page>
          <BottomRail>
            <Rail $row>
              <RailArrow aria-label="Scroll left"><Tri dir="l" color="#a3a3a3" /></RailArrow>
              <RailThumb $row $grow={1519} />
              <RailSpace $grow={295} />
              <RailArrow aria-label="Scroll right"><Tri dir="r" /></RailArrow>
            </Rail>
            <Corner />
          </BottomRail>
        </BrowserWindow>
        <RightApps />
      </Workspace>
      <TaskbarRow />
    </Desktop>
  );
}
